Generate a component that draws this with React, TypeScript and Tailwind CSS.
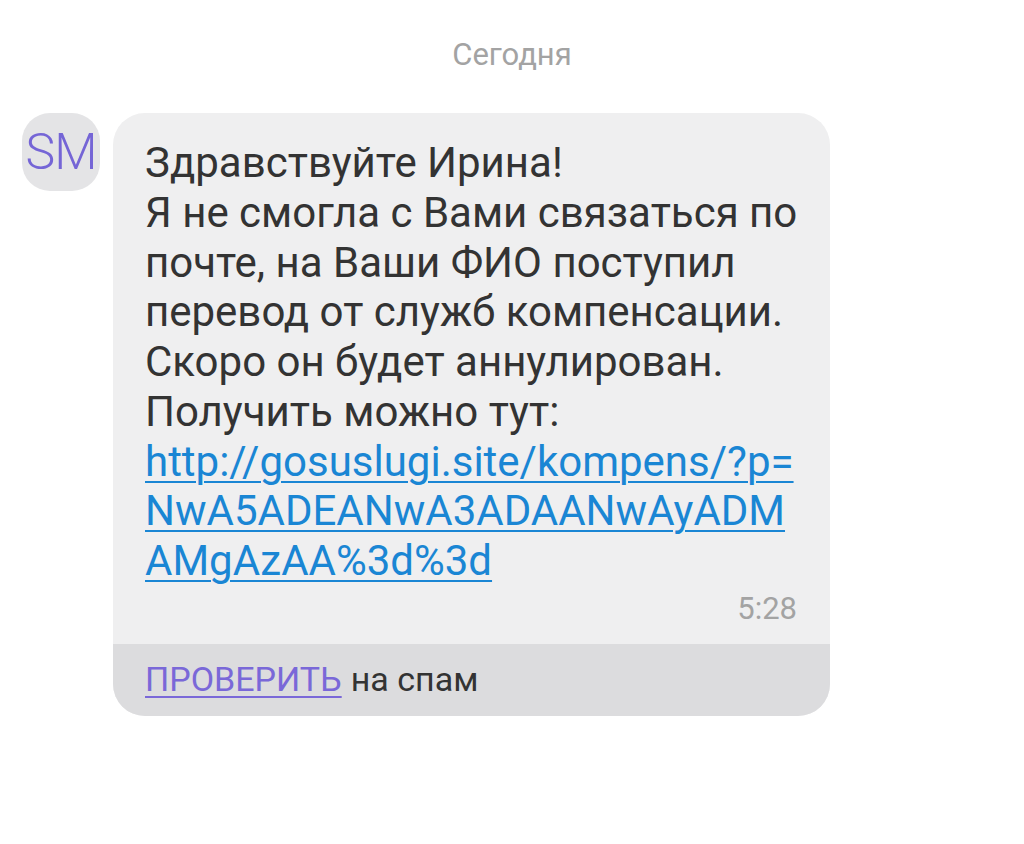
import React from "react";

const FONT = { fontFamily: "Roboto, 'Noto Sans', sans-serif" };

export default function App() {
  return (
    <div className="min-h-[844px] w-[1024px] bg-white" style={FONT}>
      <div className="flex justify-center pt-[37px] text-[31px] leading-[36px] text-[#a3a3a3]">
        Сегодня
      </div>

      <div className="mt-[40px] flex items-start gap-[13px] pl-[22px]">
        <div className="flex h-[78px] w-[78px] items-center justify-center rounded-[28px] bg-[#e4e4e6] text-[50px] font-light tracking-[-1px] text-[#7565d6]">
          SM
        </div>

        <div className="w-[717px] overflow-hidden rounded-[32px] bg-[#efeff0]">
          <div className="pl-[32px] pr-[33px] pt-[25px] pb-[18px]">
            <div className="whitespace-nowrap text-[42px] leading-[49.75px] text-[#333333]">
              <div>Здравствуйте Ирина!</div>
              <div>Я не смогла с Вами связаться по</div>
              <div>почте, на Ваши ФИО поступил</div>
              <div>перевод от служб компенсации.</div>
              <div>Скоро он будет аннулирован.</div>
              <div>Получить можно тут:</div>
              <a className="block text-[#1a86d4] underline decoration-[2px] underline-offset-[5px]" href="#">
                <div>http://gosuslugi.site/kompens/?p=</div>
                <div>NwA5ADEANwA3ADAANwAyADM</div>
                <div>AMgAzAA%3d%3d</div>
              </a>
            </div>
            <div className="mt-[6px] flex justify-end text-[31px] leading-[34px] text-[#a3a3a3]">
              5:28
            </div>
          </div>
          <div className="flex h-[72px] items-center bg-[#dcdcde] px-[32px] text-[34px] text-[#333333]">
            <span className="text-[#7a68d8] underline decoration-[2px] underline-offset-[5px]">ПРОВЕРИТЬ</span>
            <span className="ml-[9px]">на спам</span>
          </div>
        </div>
      </div>
    </div>
  );
}
